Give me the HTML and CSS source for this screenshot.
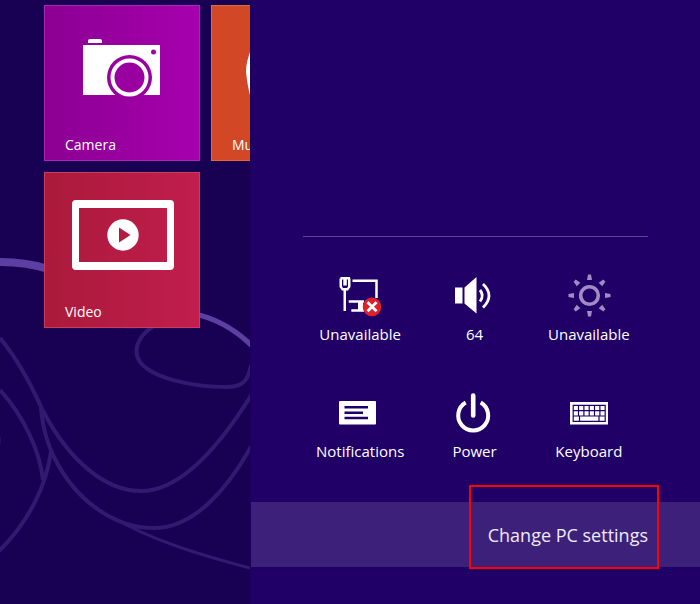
FILE: index.html
```html
<!DOCTYPE html>
<html lang="en">
<head>
<meta charset="utf-8">
<title>Settings</title>
<link rel="stylesheet" href="styles.css">
</head>
<body>
<div class="screen">
  <main class="start">
    <svg class="wallpaper" viewBox="0 0 250 604" preserveAspectRatio="xMinYMin slice" aria-hidden="true">
      <g class="swirl">
        <path d="M0 338C16 357 30 382 43 411C70 462 106 491 141 491C184 491 224 439 252 394"/>
        <path d="M41 408C43 432 49 446 54 457C74 498 112 528 154 528C196 528 230 485 252 445"/>
        <path d="M0 390C24 416 40 452 43 480"/>
        <path d="M51 451C47 484 29 522 -2 552"/>
        <path d="M112 517C151 540 200 555 250 568" stroke-width="3"/>
        <path d="M154 326C136 337 133 352 140 362C153 379 195 387 226 387C243 387 248 381 251 365"/>
      </g>
      <g class="swirl-bright">
        <path d="M-2 262C15 262 33 264 48 269" stroke-width="8"/>
        <path d="M190 313C212 317 234 328 252 346" stroke-width="5"/>
      </g>
      <path class="swirl-spot" d="M125 328h11M0 437v7"/>
    </svg>
    <div class="tiles">
      <button class="tile camera" type="button">
        <svg class="tile-art" viewBox="0 0 156 156" aria-hidden="true">
          <path fill="#fff" d="M39 40h77v50H39zM44 38v-2q0-2 2-2h10q2 0 2 2v2z"/>
          <circle cx="85.500" cy="72.500" r="22.500" fill="#9a009f"/>
          <rect x="70" y="90" width="32" height="6" fill="#9a009f"/>
          <circle cx="85.500" cy="72.500" r="17" fill="none" stroke="#fff" stroke-width="4"/>
          <circle cx="109.500" cy="47" r="2.500" fill="#9f00a4"/>
        </svg>
        <span class="tile-name">Camera</span>
      </button>
      <button class="tile music" type="button">
        <svg class="tile-art" viewBox="0 0 156 156" aria-hidden="true">
          <path fill="#fff" d="M39 47C36 56 35 61 35 67C36 76 37 82 39 90h30V47z"/>
        </svg>
        <span class="tile-name">Music</span>
      </button>
      <button class="tile video" type="button">
        <svg class="tile-art" viewBox="0 0 156 156" aria-hidden="true">
          <path fill="#fff" fill-rule="evenodd" d="M32 28h94q4 0 4 4v62q0 4-4 4H32q-4 0-4-4V32q0-4 4-4zM35 36v54h88V36z"/>
          <circle cx="79" cy="63" r="15.700" fill="#fff"/>
          <path fill="#b41b40" d="M75 55.500v15L86.500 63z"/>
        </svg>
        <span class="tile-name">Video</span>
      </button>
    </div>
  </main>
  <aside class="panel">
    <div class="controls">
      <button class="control" type="button">
        <svg class="icon" viewBox="0 0 48 48" aria-hidden="true">
          <path fill="#fff" fill-rule="evenodd" d="M4.500 6h9.500v1.500h.5v8.500l-2.500 3.500h-2V40H7.500V19.500H6L3.500 16V7.500h1zM6 8.500v7l1 1.500h4l1-1.500v-7h-1.200v6H7.300v-6z"/>
          <g fill="none" stroke="#fff" stroke-width="2.500">
            <path d="M16.500 9.800h24V27M12.700 30.500H28M15.300 39.500H28"/>
            <path d="M24.500 30v10" stroke-width="5"/>
          </g>
          <circle cx="36" cy="35.800" r="9.300" fill="#e0202a"/>
          <path d="M31.500 31.300l9 9m0-9l-9 9" stroke="#fff" stroke-width="2.800"/>
        </svg>
        <span>Unavailable</span>
      </button>
      <button class="control" type="button">
        <svg class="icon" viewBox="0 0 48 48" aria-hidden="true">
          <path fill="#fff" d="M5 16.500h7.500v16H5zM14.500 16.500L26.500 6v36.500L14.500 32.500z"/>
          <path fill="none" stroke="#fff" stroke-width="2.800" d="M30 19q4.500 5.500 0 11.500M33 13q12 11.500 0 23.500"/>
        </svg>
        <span>64</span>
      </button>
      <button class="control" type="button">
        <svg class="icon" viewBox="0 0 48 48" aria-hidden="true">
          <circle cx="24.500" cy="24.500" r="8.800" fill="none" stroke="#a08bc4" stroke-width="3.600"/>
          <g fill="#a08bc4" transform="translate(24.500 24.500)">
            <path id="ray" d="M-1.500-21h3l1 5.500h-5z"/>
            <use href="#ray" transform="rotate(45)"/>
            <use href="#ray" transform="rotate(90)"/>
            <use href="#ray" transform="rotate(135)"/>
            <use href="#ray" transform="rotate(180)"/>
            <use href="#ray" transform="rotate(225)"/>
            <use href="#ray" transform="rotate(270)"/>
            <use href="#ray" transform="rotate(315)"/>
          </g>
        </svg>
        <span>Unavailable</span>
      </button>
      <button class="control" type="button">
        <svg class="icon" viewBox="0 0 48 48" aria-hidden="true">
          <rect x="3" y="13" width="37" height="23.500" rx="1" fill="#fff"/>
          <path stroke="#200067" stroke-width="2.400" d="M8.500 19.300H32M8.500 24.700H27M8.500 30H32"/>
        </svg>
        <span>Notifications</span>
      </button>
      <button class="control" type="button">
        <svg class="icon" viewBox="0 0 48 48" aria-hidden="true">
          <path fill="none" stroke="#fff" stroke-width="4" d="M15.700 14.500A15 15 0 1 0 30.700 14.500"/>
          <path fill="none" stroke="#fff" stroke-width="4.600" stroke-linecap="round" d="M23.200 7.500v20"/>
        </svg>
        <span>Power</span>
      </button>
      <button class="control" type="button">
        <svg class="icon" viewBox="0 0 48 48" aria-hidden="true">
          <rect x="5" y="14" width="38" height="22.500" fill="#fff"/>
          <path fill="none" stroke="#200067" stroke-width="1.200" d="M8.200 17.300h32v16h-32zM8.200 22.600h32M8.200 28h32M13.500 17.300V28M18.900 17.300V28M24.200 17.300V28M29.500 17.300V28M34.900 17.300V28M14.500 28v5.300M34 28v5.300"/>
        </svg>
        <span>Keyboard</span>
      </button>
    </div>
    <a class="change" href="#settings"><span class="change-text">Change PC settings</span></a>
  </aside>
</div>
</body>
</html>
```
FILE: styles.css
```css
* {
  box-sizing: border-box;
}

body {
  margin: 0;
  font-family: "Open Sans", "Noto Sans", sans-serif;
  font-size: 14px;
  line-height: 20px;
  color: #fff;
  background: #200067;
}

button {
  padding: 0;
  border: 0;
  background: none;
  color: inherit;
  font: inherit;
}

.screen {
  display: grid;
  grid-template-columns: minmax(0, 250fr) minmax(0, 450fr);
  min-height: 100vh;
}

.start {
  position: relative;
  overflow: hidden;
  padding: 5px 0 0 44px;
  background: #180052;
}

.wallpaper {
  position: absolute;
  inset: 0;
  width: 100%;
  height: 100%;
}

.swirl,
.swirl-bright,
.swirl-spot {
  fill: none;
  stroke: #33196f;
  stroke-width: 4;
}

.swirl-bright {
  stroke: #5d3fa3;
}

.swirl-spot {
  stroke-width: 1;
}

.tiles {
  position: relative;
  display: grid;
  grid-template-columns: 156px 156px;
  grid-auto-rows: 156px;
  gap: 11px;
}

.tile {
  display: grid;
  border: 1px solid;
  text-align: left;
}

.tile-art,
.tile-name {
  grid-area: 1 / 1;
}

.tile-art {
  width: 156px;
  height: 156px;
  margin: -1px;
}

.tile-name {
  align-self: end;
  padding: 0 20px 5px;
}

.camera {
  background: linear-gradient(90deg, #8b0092, #a700ae);
  border-color: #a826b0;
}

.music {
  background: #d24726;
  border-color: #e26a38;
}

.video {
  background: linear-gradient(90deg, #aa1a3b, #c11e4d);
  border-color: #cc3b5c;
}

.panel {
  display: flex;
  flex-direction: column;
  justify-content: flex-end;
  padding-bottom: 37px;
  border-left: 1px solid #1c005c;
}

.controls {
  display: grid;
  grid-template-columns: repeat(3, minmax(0, 1fr));
  row-gap: 44px;
  margin: 0 52px 41px;
  padding: 34px 2px 0 0;
  border-top: 1px solid #5d4498;
  font-size: 15px;
}

.control {
  display: flex;
  flex-direction: column;
  align-items: center;
  gap: 5px;
}

.icon {
  width: 48px;
  height: 48px;
}

.change {
  display: flex;
  align-items: center;
  justify-content: flex-end;
  height: 65px;
  padding-right: 52px;
  background: #3d207a;
  color: #efeaf7;
  font-size: 18px;
  line-height: 24px;
  text-decoration: none;
}

.change-text {
  position: relative;
}

.change-text::after {
  content: "";
  position: absolute;
  inset: -38px -11px -22px -19px;
  border: 2px solid #f00;
}
```
